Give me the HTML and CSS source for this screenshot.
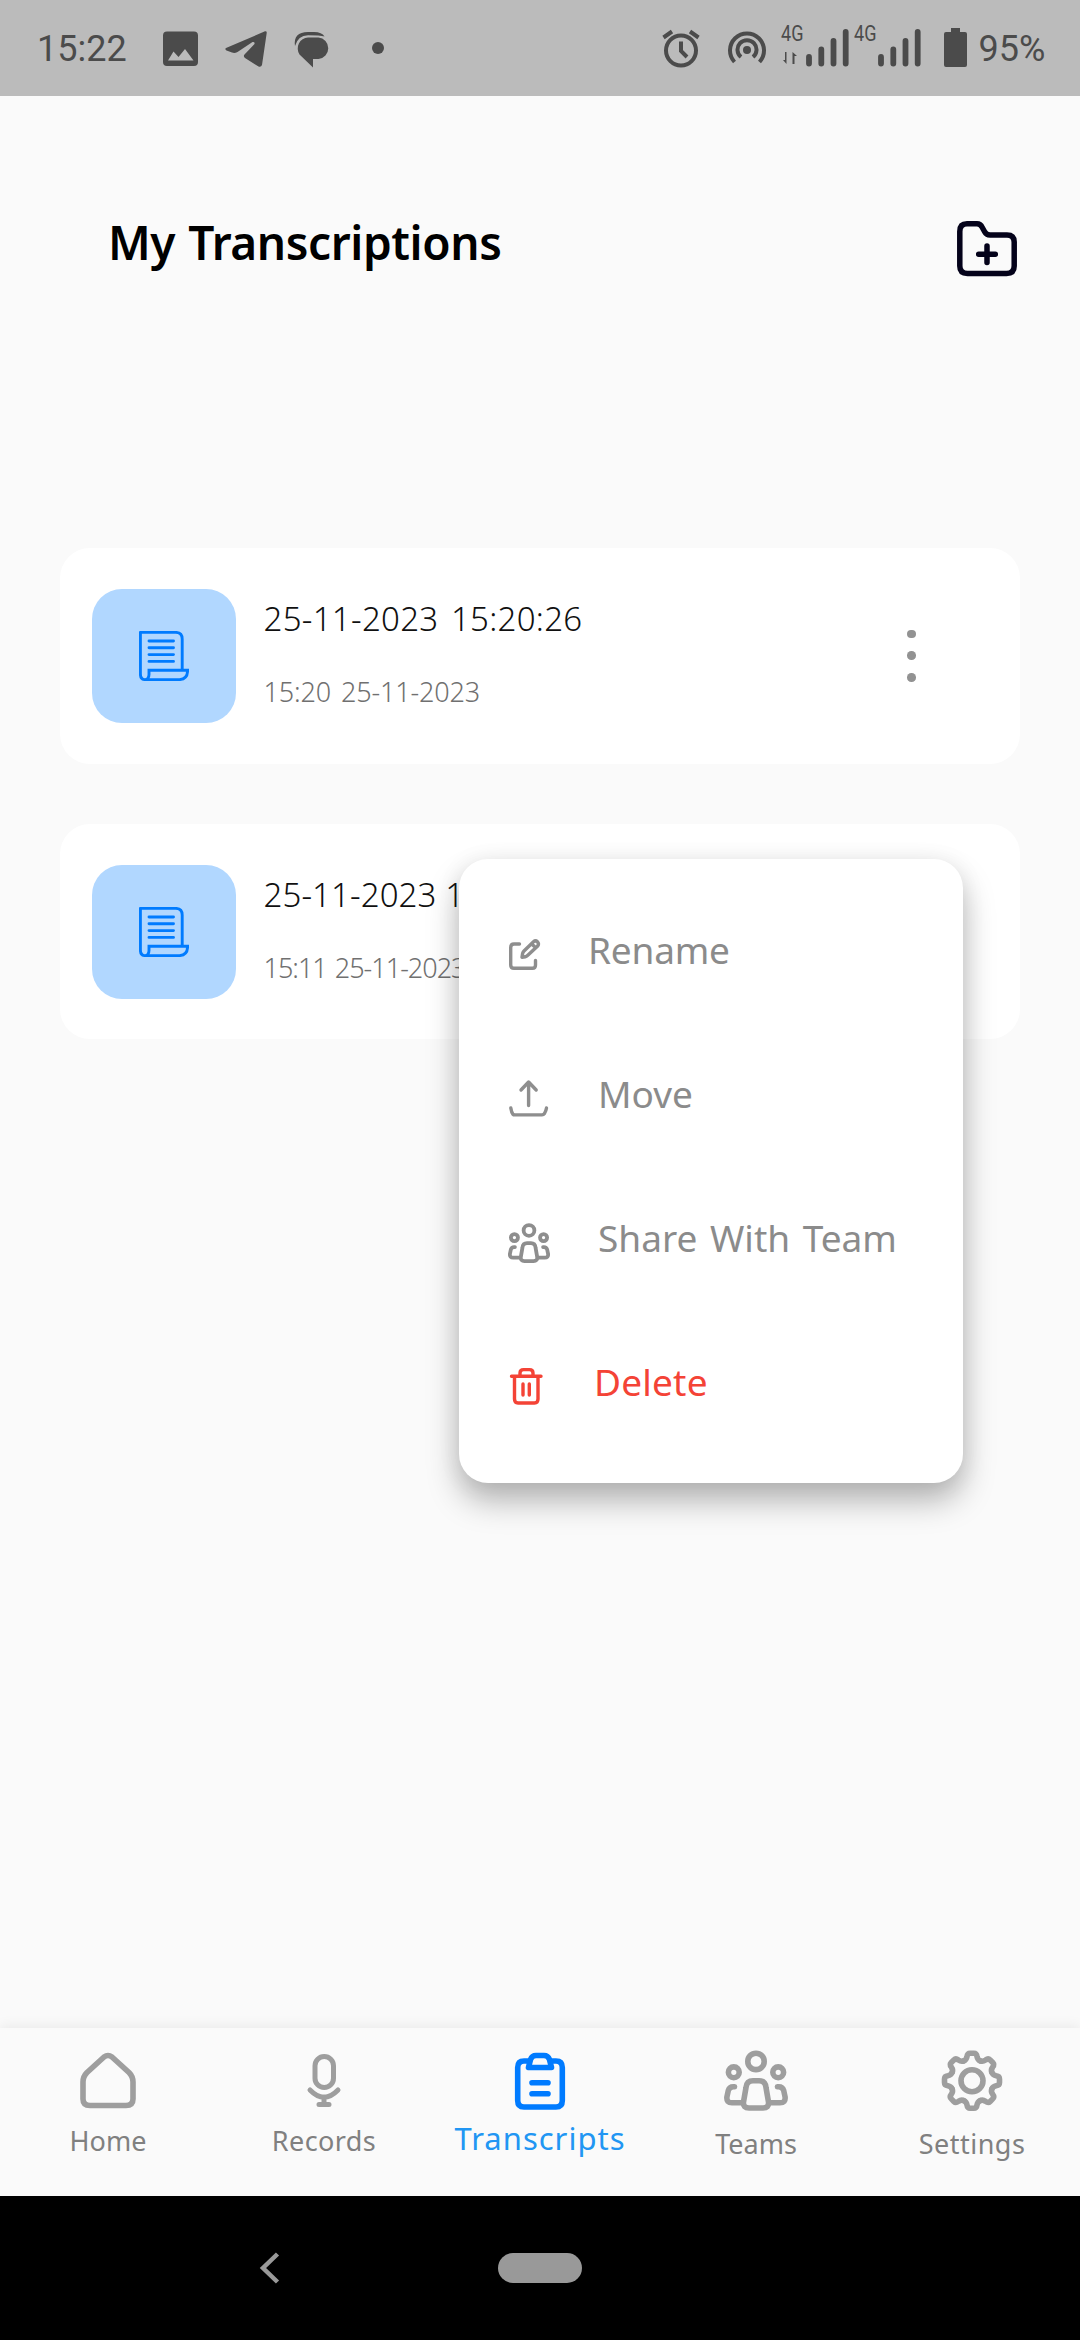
FILE: index.html
```html
<!DOCTYPE html>
<html lang="en">
<head>
<meta charset="utf-8">
<title>My Transcriptions</title>
<link rel="stylesheet" href="styles.css">
</head>
<body>
<svg class="defs" width="0" height="0" aria-hidden="true">
  <symbol id="scroll" viewBox="0 0 50 50"><path d="M1.4 1.4H36.5Q43.2 1.4 43.2 8V38M1.4 1.4V43Q1.4 48.6 6 48.6H40.5Q48.6 48.2 48.6 39.3H10V43.5Q9.8 48.6 6 48.6"/><path d="M10 10H34.5M10 16.8H34.5M10 23.6H34.5M10 30.4H34.5"/></symbol>
  <symbol id="team" viewBox="0 -1 64 61" preserveAspectRatio="none"><circle cx="32" cy="10.4" r="8.2"/><circle cx="9.8" cy="21.3" r="5.4"/><circle cx="54.2" cy="21.3" r="5.4"/><path d="M29 29.8H35Q41.3 29.8 42 36.5L44.5 51Q45 57 39 57H25Q19 57 19.5 51L22 36.5Q22.7 29.8 29 29.8ZM10.5 35.8Q5.5 35.3 4.3 39.5L2.9 46Q2.3 51.8 8 51.8H19M53.5 35.8Q58.5 35.3 59.7 39.5L61.1 46Q61.7 51.8 56 51.8H45"/></symbol>
</svg>
<div class="screen">
  <header class="status">
    <span class="clock">15:22</span>
    <svg class="s-image" width="36" height="36"><path fill-rule="evenodd" d="M4 0.500H31Q35 .5 35 4.500V31Q35 35 31 35H4Q0 35 0 31V4.500Q0 .5 4 .5ZM5 29.500H30.500L22 18L15.500 26L10.500 20.500Z"/></svg>
    <svg class="s-send" width="42" height="37"><path d="M1 17L40 .3Q42 0 41.700 2L37 34Q36 36.500 33.500 35.500L20 27Q18 25.500 19.500 23.500L29.500 13Q30 10.500 27.500 11L12.500 21Q9.500 22.500 7 21.500L1.500 19.500Q-.5 18.300 1 17Z"/></svg>
    <svg class="s-chat" width="36" height="36"><path d="M14 5.500H24.500A10.800 10.800 0 0 1 24.500 27H19V35.500L5.500 22.500A11 11 0 0 1 14 5.500Z"/><path d="M1 14Q-1 0 14 0H20Q28 0 30.500 4.500Q26 3.300 14 3.300Q4 3.500 1 14Z"/></svg>
    <span class="s-dot"></span>
    <svg class="s-alarm line" width="38" height="38"><circle cx="19" cy="20.500" r="15"/><path d="M19 11.500V21L25 27M1.500 7.500L10 1.500M36.500 7.500L28 1.500"/></svg>
    <svg class="s-hotspot line" width="38" height="38"><circle class="solid" cx="19" cy="19" r="4"/><path d="M6.500 31A17 17 0 1 1 31.500 31M13 26A9.500 9.500 0 1 1 25 26"/></svg>
    <span class="net"><b>4G</b><svg width="16" height="12"><path d="M3.500 0V12L0 8H2V0ZM9.500 12V0L14 4H11.500V12Z"/></svg></span>
    <svg class="bars line" width="44" height="38"><path d="M3 28V34.500M15.300 20.500V34.500M27.500 12V34.500M39.700 3V34.500"/></svg>
    <span class="net net2"><b>4G</b></span>
    <svg class="bars line" width="44" height="38"><path d="M3 28V34.500M15.300 20.500V34.500M27.500 12V34.500M39.700 3V34.500"/></svg>
    <svg class="s-battery" width="23" height="39"><path d="M7 0H16V4H21Q23 4 23 6V37Q23 39 21 39H2Q0 39 0 37V6Q0 4 2 4H7Z"/></svg>
    <span class="percent">95%</span>
  </header>

  <main class="content">
    <div class="title-row">
      <h1>My Transcriptions</h1>
      <svg class="folder" width="60" height="56"><path d="M10 2.800H20Q23.500 2.800 25 6L27.500 10.500Q29.300 14 33 14H50Q57.200 14 57.200 21V45Q57.200 52.500 49.500 52.500H10.500Q2.800 52.500 2.800 45V10.500Q2.800 2.800 10 2.800ZM30 25V41.600M21.700 33.300H38.300"/></svg>
    </div>
    <section class="list">
      <article class="card">
        <div class="tile"><svg width="50" height="50"><use href="#scroll"/></svg></div>
        <div class="info"><p class="name">25-11-2023 15:20:26</p><p class="date">15:20 25-11-2023</p></div>
        <div class="more"><i></i><i></i><i></i></div>
      </article>
      <article class="card">
        <div class="tile"><svg width="50" height="50"><use href="#scroll"/></svg></div>
        <div class="info"><p class="name narrow">25-11-2023 15:11:26</p><p class="date narrow">15:11 25-11-2023</p></div>
        <div class="more"><i></i><i></i><i></i></div>
      </article>
    </section>
    <ul class="menu">
      <li class="rename"><svg width="32" height="32"><path d="M10.500 5H5Q1.700 5 1.700 8.500V26Q1.700 29.300 5 29.300H23.500Q26.500 29.300 26.500 26V21.500"/><path d="M13 18.200L13.600 14.500Q14 13 15 12L24.500 2.800Q26.500 1 28.500 2.800Q30.300 4.800 28.700 7L18.800 16.300Q17.500 17.500 16.300 17.700ZM23.300 5.500L26.500 8.500"/></svg>Rename</li>
      <li class="move"><svg width="40" height="37"><path d="M19.600 25.500V2.500M12 10L19.600 2L27.200 10M1.800 28Q2.500 32.500 4 34.300Q4.500 34.900 6 34.900H33Q34.500 34.900 35.500 33.500Q37 31 37.500 28"/></svg>Move</li>
      <li class="share"><svg width="42" height="40"><use href="#team"/></svg>Share With Team</li>
      <li class="delete"><svg width="33" height="37"><path d="M1.500 8.200H31M4.500 8.200V31Q4.500 35 8 35H24.500Q28 35 28 31V8.200M10 8V5Q10 1.600 13.500 1.600H19.500Q23 1.600 23 5V8M13 16V27M19.300 16V27"/></svg>Delete</li>
    </ul>
  </main>

  <nav class="tabs">
    <a class="tab"><svg width="64" height="60"><path d="M7 31V48Q7 54.500 14 54.500H50Q57 54.500 57 48V31Q57 25.500 53 21.500L36 6Q32 3 28 6L11 21.500Q7 25.500 7 31Z"/></svg><span>Home</span></a>
    <a class="tab mic"><svg width="64" height="60"><rect x="23" y="5.500" width="18.500" height="31" rx="9.250"/><path d="M18 39Q32 53.500 46 39M32 46V53M27 53.500H37"/></svg><span>Records</span></a>
    <a class="tab active"><svg width="64" height="60"><path d="M22 10H16Q9.700 10 9.700 16.500V49.500Q9.700 56 16 56H48Q54.300 56 54.300 49.500V16.500Q54.300 10 48 10H42M20.500 16.500H43.500L41.500 8.500Q40 4.500 36 4.500H28Q24 4.500 22.500 8.500ZM24 31.700H40M24 42.800H40"/></svg><span>Transcripts</span></a>
    <a class="tab low"><svg class="people" width="64" height="61"><use href="#team"/></svg><span>Teams</span></a>
    <a class="tab low set"><svg width="64" height="60"><defs><path id="tooth" d="M-8.200 -19.900C-6.400 -20.600 -5.400 -22 -5 -24.200Q-4.600 -27.500 -1.800 -27.500H1.800Q4.600 -27.500 5 -24.200C5.400 -22 6.400 -20.600 8.200 -19.900"/></defs><g transform="translate(32 29.700)"><circle r="11"/><use href="#tooth"/><use href="#tooth" transform="rotate(45)"/><use href="#tooth" transform="rotate(90)"/><use href="#tooth" transform="rotate(135)"/><use href="#tooth" transform="rotate(180)"/><use href="#tooth" transform="rotate(225)"/><use href="#tooth" transform="rotate(270)"/><use href="#tooth" transform="rotate(315)"/></g></svg><span>Settings</span></a>
  </nav>
  <footer class="system">
    <svg width="20" height="32"><path d="M17.500 2L3 16L17.500 30"/></svg>
    <span class="pill"></span>
  </footer>
</div>
</body>
</html>
```
FILE: styles.css
```css
* { box-sizing: border-box; }
body { margin: 0; background: #fafafa; font-family: "Noto Sans", "Open Sans", sans-serif; }
h1, p, ul { margin: 0; padding: 0; }
svg { display: block; flex: none; overflow: visible; }
.defs { position: absolute; }
.screen { display: flex; flex-direction: column; width: 1080px; height: 2340px; overflow: hidden; }

.status { display: flex; align-items: flex-start; height: 96px; background: #bbb; color: #4b4b4b; fill: #4b4b4b; font-family: Roboto, sans-serif; }
.clock, .percent { font-size: 36px; line-height: 42px; margin-top: 28px; }
.clock { width: 126px; padding-left: 37px; }
.line { fill: none; stroke: #4b4b4b; stroke-width: 4; }
.line .solid { fill: #4b4b4b; stroke: none; }
.s-image { margin: 31px 0 0 37px; }
.s-send { margin: 31px 0 0 26px; }
.s-chat { margin: 32px 0 0 27px; }
.s-dot { width: 12px; height: 12px; margin: 42px 0 0 42px; border-radius: 50%; background: #4b4b4b; }
.s-alarm { margin: 30px 0 0 277.500px; }
.s-hotspot { margin: 31px 0 0 28.500px; }
.net { display: flex; flex-direction: column; width: 40px; margin-top: 24px; padding-left: 15px; }
.net2 { width: 28px; padding-left: 4px; }
.net b { width: 28px; font-weight: 400; font-size: 22px; line-height: 20px; transform: scaleX(.82); transform-origin: left; }
.net svg { margin: 8px 0 0 2px; }
.bars { margin-top: 29px; stroke-width: 5.800; stroke-linecap: round; }
.s-battery { margin: 28px 0 0 21.500px; }
.percent { margin-left: 12px; }

.content { position: relative; flex: 1; padding: 112px 60px 0; }
.title-row { display: flex; align-items: flex-start; justify-content: space-between; height: 340px; padding: 0 3px 0 48px; }
h1 { font-size: 46px; line-height: 66px; font-weight: 600; color: #000; letter-spacing: -.4px; word-spacing: 1.500px; margin-top: .500px; }
.folder { margin-top: 13px; fill: none; stroke: #04021a; stroke-width: 5.500; stroke-linecap: round; stroke-linejoin: round; }

.list { display: flex; flex-direction: column; gap: 60px; }
.card { display: flex; align-items: flex-start; height: 215.700px; padding: 0 104px 0 32px; border-radius: 30px; background: #fff; }
.tile { display: flex; align-items: center; justify-content: center; width: 143.500px; height: 134px; margin-top: 41px; border-radius: 30px; background: #b1d7ff; }
.tile svg { fill: none; stroke: #007bff; stroke-width: 2.900; stroke-linecap: round; }
.info { flex: 1; padding: 49px 0 0 28px; }
.name { font-size: 33px; line-height: 44px; font-weight: 300; color: #101010; letter-spacing: .3px; word-spacing: 3.500px; }
.name.narrow { letter-spacing: .1px; word-spacing: 0; }
.date { margin-top: 33px; font-size: 27px; line-height: 36px; font-weight: 300; color: #707070; letter-spacing: -.15px; word-spacing: 3px; }
.date.narrow { letter-spacing: -1px; word-spacing: 2px; }
.more { display: flex; flex-direction: column; gap: 13.400px; margin-top: 81.500px; }
.more i { width: 8.600px; height: 8.600px; border-radius: 50%; background: #929292; }

.menu { position: absolute; left: 459px; top: 763px; width: 504px; height: 624px; padding: 19px 0 0 50px; border-radius: 29px; background: #fff; list-style: none; box-shadow: 0 18px 32px rgba(0,0,0,.28), 0 2px 24px rgba(0,0,0,.07); }
.menu li { display: flex; align-items: center; height: 144px; font-size: 37px; line-height: 50px; color: #8b8b8b; }
.menu svg { margin-top: 9px; fill: none; stroke: #8e8e8e; stroke-width: 3.400; stroke-linecap: round; stroke-linejoin: round; }
.rename { gap: 47px; letter-spacing: -.2px; }
.move { gap: 49px; }
.share { gap: 48px; margin-left: -1px; word-spacing: 3px; }
.delete { gap: 51px; padding-left: 1px; letter-spacing: .2px; }
.menu .share svg { stroke-width: 5.800; }
.menu .delete { color: #f44336; }
.menu .delete svg { stroke: #f44336; }

.tabs { display: flex; height: 168px; background: #fafafa; box-shadow: 0 -2px 12px rgba(0,0,0,.07); }
.tab { display: flex; flex-direction: column; align-items: center; width: 216px; padding-top: 23px; font-size: 27px; line-height: 36px; font-weight: 400; color: #808080; }
.tab svg { height: 60px; fill: none; stroke: #9e9e9e; stroke-width: 5.600; stroke-linecap: round; stroke-linejoin: round; }
.tab span { margin-top: 11.500px; }
.tab.mic svg { stroke-width: 5; }
.tab.mic span { letter-spacing: .4px; }
.tab.low span { margin-top: 14.500px; }
.tab .people { height: 61px; margin: -1px 0 0; }
.tab.set span { letter-spacing: .5px; }
.tab.active { color: #2196f3; font-size: 31px; line-height: 40px; font-weight: 400; letter-spacing: 1px; }
.tab.active svg { stroke: #007bff; }
.tab.active span { margin-top: 7px; }

.system { display: flex; align-items: center; height: 144px; padding-left: 260px; gap: 218px; background: #000; }
.system svg { fill: none; stroke: #999; stroke-width: 4.500; }
.pill { width: 84px; height: 30px; border-radius: 15px; background: #999; }
```
